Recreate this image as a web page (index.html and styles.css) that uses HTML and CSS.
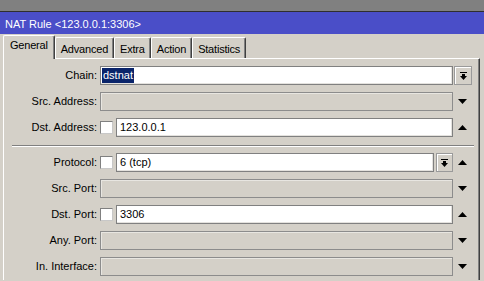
FILE: index.html
```html
<!DOCTYPE html>
<html lang="en">
<head>
    <meta charset="UTF-8">
    <meta name="viewport" content="width=device-width, initial-scale=1.0">
    <title>NAT Rule</title>
    <link rel="stylesheet" href="styles.css">
</head>
<body>
<div class="desk"></div>
<div class="titlebar">NAT Rule &lt;123.0.0.1:3306&gt;</div>

<div class="tabs">
    <div class="tab active">General</div>
    <div class="tab">Advanced</div>
    <div class="tab">Extra</div>
    <div class="tab">Action</div>
    <div class="tab">Statistics</div>
</div>

<div class="panel">
    <div class="row">
        <div class="lbl">Chain:</div>
        <div class="field">
            <div class="input"><span class="sel">dstnat</span></div>
        </div>
        <div class="side">
            <div class="drop">
                <svg width="7" height="8" viewBox="0 0 7 8"><rect x="0" y="0" width="7" height="1" fill="#000"/><rect x="2" y="2" width="3" height="2" fill="#000"/><polygon points="0,4 7,4 3.5,8" fill="#000"/></svg>
            </div>
        </div>
    </div>
    <div class="row">
        <div class="lbl">Src. Address:</div>
        <div class="field"><div class="input off"></div></div>
        <div class="side"><svg class="arrow" width="9" height="5" viewBox="0 0 9 5"><polygon points="0,0 9,0 4.5,5" fill="#000"/></svg></div>
    </div>
    <div class="row">
        <div class="lbl">Dst. Address:</div>
        <div class="field">
            <div class="check"></div>
            <div class="input">123.0.0.1</div>
        </div>
        <div class="side"><svg class="arrow" width="9" height="5" viewBox="0 0 9 5"><polygon points="0,5 9,5 4.5,0" fill="#000"/></svg></div>
    </div>

    <div class="sep"></div>

    <div class="row">
        <div class="lbl">Protocol:</div>
        <div class="field">
            <div class="check"></div>
            <div class="input">6 (tcp)</div>
            <div class="drop small">
                <svg width="7" height="8" viewBox="0 0 7 8"><rect x="0" y="0" width="7" height="1" fill="#000"/><rect x="2" y="2" width="3" height="2" fill="#000"/><polygon points="0,4 7,4 3.5,8" fill="#000"/></svg>
            </div>
        </div>
        <div class="side"><svg class="arrow" width="9" height="5" viewBox="0 0 9 5"><polygon points="0,5 9,5 4.5,0" fill="#000"/></svg></div>
    </div>
    <div class="row">
        <div class="lbl">Src. Port:</div>
        <div class="field"><div class="input off"></div></div>
        <div class="side"><svg class="arrow" width="9" height="5" viewBox="0 0 9 5"><polygon points="0,0 9,0 4.5,5" fill="#000"/></svg></div>
    </div>
    <div class="row">
        <div class="lbl">Dst. Port:</div>
        <div class="field">
            <div class="check"></div>
            <div class="input">3306</div>
        </div>
        <div class="side"><svg class="arrow" width="9" height="5" viewBox="0 0 9 5"><polygon points="0,5 9,5 4.5,0" fill="#000"/></svg></div>
    </div>
    <div class="row">
        <div class="lbl">Any. Port:</div>
        <div class="field"><div class="input off"></div></div>
        <div class="side"><svg class="arrow" width="9" height="5" viewBox="0 0 9 5"><polygon points="0,0 9,0 4.5,5" fill="#000"/></svg></div>
    </div>
    <div class="row">
        <div class="lbl">In. Interface:</div>
        <div class="field"><div class="input off"></div></div>
        <div class="side"><svg class="arrow" width="9" height="5" viewBox="0 0 9 5"><polygon points="0,0 9,0 4.5,5" fill="#000"/></svg></div>
    </div>
</div>
</body>
</html>
```

FILE: styles.css
```css
html, body {
    margin: 0;
    height: 100%;
    overflow: hidden;
}

body {
    background: #d4d0c8;
    font-family: "Liberation Sans", Arial, sans-serif;
    font-size: 11px;
    color: #000;
}

.desk {
    height: 11px;
    background: #808080;
    border-bottom: 1px solid #2e2e2e;
}

.titlebar {
    height: 22px;
    line-height: 24px;
    padding-left: 5px;
    background: #4a4ec8;
    color: #fff;
    font-size: 11px;
}

/* tab strip */
.tabs {
    display: flex;
    align-items: flex-end;
    height: 23px;
    margin-top: 1px;
    padding-left: 3px;
}

.tab {
    height: 21px;
    line-height: 22px;
    padding: 0 5px;
    box-sizing: border-box;
    border-top: 1px solid #fff;
    border-left: 1px solid #fff;
    border-right: 1px solid #404040;
    box-shadow: inset -1px 0 #808080;
    border-radius: 2px 2px 0 0;
    letter-spacing: -0.2px;
}

.tab.active {
    position: relative;
    z-index: 1;
    height: 24px;
    margin-bottom: -1px;
    line-height: 19px;
    padding: 0 6px;
    background: #d4d0c8;
}

.panel {
    margin: 0 4px 0 3px;
    padding-top: 3px;
    border-top: 1px solid #fff;
    border-left: 1px solid #fff;
    border-right: 1px solid #404040;
    box-shadow: inset -1px 0 #808080;
    height: 218px;
}

/* form rows */
.row {
    display: flex;
    align-items: flex-start;
    height: 26px;
    padding-top: 4px;
    box-sizing: border-box;
}

.lbl {
    width: 93px;
    margin-right: 3px;
    text-align: right;
    line-height: 19px;
    white-space: nowrap;
}

.field {
    display: flex;
    gap: 2px;
    width: 353px;
}

.side {
    flex: 1;
    display: flex;
    padding-left: 1px;
}

.input {
    flex: 1;
    height: 19px;
    box-sizing: border-box;
    padding: 0 3px;
    line-height: 17px;
    background: #fff;
    border: 1px solid #808080;
    box-shadow: inset -1px -1px #e4e2de;
    white-space: nowrap;
}

.input.off {
    background: #d4d0c8;
    border-color: #8c8c8c;
    box-shadow: inset 1px 1px #e8e6e1;
}

.sel {
    display: inline-block;
    margin-left: -2px;
    padding: 0 1px;
    line-height: 15px;
    margin-top: 1px;
    background: #0a246a;
    color: #fff;
}

.check {
    width: 13px;
    height: 13px;
    margin-top: 3px;
    box-sizing: border-box;
    background: #fff;
    border: 1px solid;
    border-color: #808080 #c8c8c8 #c8c8c8 #808080;
    margin-right: 1px;
}

.drop {
    width: 18px;
    height: 19px;
    box-sizing: border-box;
    display: flex;
    align-items: center;
    justify-content: center;
    background: #d4d0c8;
    border: 1px solid #9a9a9a;
    box-shadow: inset 1px 1px #fff;
}

.drop.small {
    width: 17px;
}

.arrow {
    margin: 7px 0 0 4px;
}

.sep {
    margin: 5px 5px 2px 8px;
    border-top: 1px solid #808080;
    border-bottom: 1px solid #fff;
}
```
